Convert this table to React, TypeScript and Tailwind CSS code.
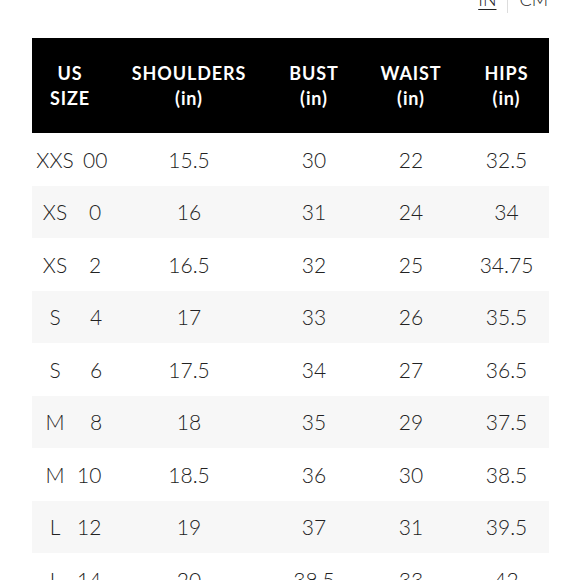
const columns = ['w', 'SHOULDERS', 'BUST', 'WAIST', 'HIPS']

const rows = [
  { size: 'XXS', num: '00', offset: 'ml-[5px]', values: ['15.5', '30', '22', '32.5'] },
  { size: 'XS', num: '0', offset: 'ml-[11px]', values: ['16', '31', '24', '34'] },
  { size: 'XS', num: '2', offset: 'ml-[11px]', values: ['16.5', '32', '25', '34.75'] },
  { size: 'S', num: '4', offset: 'ml-[12px]', values: ['17', '33', '26', '35.5'] },
  { size: 'S', num: '6', offset: 'ml-[12px]', values: ['17.5', '34', '27', '36.5'] },
  { size: 'M', num: '8', offset: 'ml-[12px]', values: ['18', '35', '29', '37.5'] },
  { size: 'M', num: '10', offset: 'ml-[-1px]', values: ['18.5', '36', '30', '38.5'] },
  { size: 'L', num: '12', offset: 'ml-[-1px]', values: ['19', '37', '31', '39.5'] },
  { size: 'L', num: '14', offset: 'ml-[-1px]', values: ['20', '38.5', '33', '42'] },
]

const grid = 'grid grid-cols-[76px_162px_88px_106px_85px]'

export default function App() {
  return (
    <div className="h-[580px] w-[580px] overflow-hidden bg-white font-['Lato','Liberation_Sans',sans-serif] text-[#222]">
      <div className="-mt-[15px] flex h-[28px] items-center justify-end pr-[32px] text-[18px] font-light">
        <span className="underline decoration-1 underline-offset-[3px]">IN</span>
        <span className="mx-[11px] h-full w-px bg-[#ddd]" />
        <span>CM</span>
      </div>

      <div className="ml-[32px] mt-[25px] w-[517px]">
        <div className={`${grid} h-[95px] items-center bg-black text-[18px] leading-[25px] font-bold tracking-[0.9px] text-white`}>
          {columns.map((col, i) => (
            <div key={col} className="text-center">
              {i === 0 ? (
                <>
                  US
                  <br />
                  SIZE
                </>
              ) : (
                <>
                  {col}
                  <br />
                  (in)
                </>
              )}
            </div>
          ))}
        </div>

        {rows.map((row, i) => (
          <div
            key={row.size + row.num}
            className={`${grid} h-[52.5px] items-center text-[21px] font-light ${i % 2 === 1 ? 'bg-[#f7f7f7]' : 'bg-white'}`}
          >
            <div className="flex">
              <span className="w-[46px] text-center">{row.size}</span>
              <span className={row.offset}>{row.num}</span>
            </div>
            {row.values.map((v, j) => (
              <div key={j} className="text-center">
                {v}
              </div>
            ))}
          </div>
        ))}
      </div>
    </div>
  )
}
